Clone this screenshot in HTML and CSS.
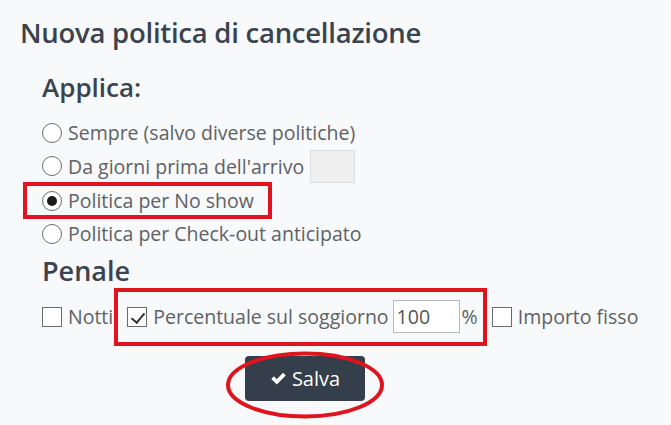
FILE: index.html
```html
<!DOCTYPE html>
<html lang="it">
<head>
<meta charset="utf-8">
<title>Nuova politica di cancellazione</title>
<link rel="stylesheet" href="styles.css">
</head>
<body>
<div class="panel">
  <h1 class="title">Nuova politica di cancellazione</h1>
  <div class="section">
    <h2 class="heading">Applica:</h2>
    <div class="options">
      <label class="opt"><span class="radio"></span>Sempre (salvo diverse politiche)</label>
      <label class="opt"><span class="radio"></span>Da giorni prima dell'arrivo <span class="days"></span></label>
      <label class="opt marked"><span class="radio checked"></span>Politica per No show</label>
      <label class="opt"><span class="radio"></span>Politica per Check-out anticipato</label>
    </div>
    <h2 class="heading penale">Penale</h2>
    <div class="checks">
      <label class="chk"><span class="box"></span>Notti</label>
      <div class="marked-row">
        <label class="chk"><span class="box checked"></span>Percentuale sul soggiorno</label>
        <span class="num">100</span>
        <span class="pct">%</span>
      </div>
      <label class="chk"><span class="box"></span>Importo fisso</label>
    </div>
    <div class="actions">
      <button class="btn"><svg class="tick" viewBox="0 0 16 16" width="17" height="17"><path d="M1.2 8.4 L3.7 5.9 L6.4 8.6 L12.3 2.7 L14.8 5.2 L6.4 13.6 Z" fill="#fff"/></svg>Salva</button>
      <svg class="ring" viewBox="0 0 160 68" width="160" height="68"><ellipse cx="80" cy="34" rx="77" ry="31.5" fill="none" stroke="#e0141e" stroke-width="4"/></svg>
    </div>
  </div>
</div>
</body>
</html>
```
FILE: styles.css
```css
* { box-sizing: border-box; }
html, body { margin: 0; padding: 0; }
body {
  background: #f8f9fa;
  font-family: "Open Sans", "Liberation Sans", sans-serif;
  color: #5d6166;
  width: 671px;
  height: 425px;
  overflow: hidden;
}
.panel { padding: 18px 0 0 20px; }
.title {
  margin: 0;
  font-size: 27.5px;
  line-height: 30px;
  font-weight: 600;
  color: #3a4350;
  letter-spacing: -0.25px;
}
.section { padding-left: 22px; }
.heading {
  margin: 22px 0 0 0;
  font-size: 26px;
  line-height: 34px;
  font-weight: 600;
  color: #3a4350;
}
.options { margin-top: 12px; display: flex; flex-direction: column; }
.opt {
  display: flex;
  align-items: center;
  height: 33.5px;
  font-size: 19.5px;
  white-space: nowrap;
}
.radio {
  width: 20px;
  height: 20px;
  border: 1px solid #6a6a6a;
  border-radius: 50%;
  background: #fff;
  margin-right: 6px;
  display: inline-flex;
  align-items: center;
  justify-content: center;
  flex: none;
}
.radio.checked::after {
  content: "";
  width: 10px;
  height: 10px;
  border-radius: 50%;
  background: #1a1a1a;
}
.days {
  display: inline-block;
  width: 45px;
  height: 33px;
  margin-left: 6px;
  background: #efefef;
  border: 1px solid #dcdcdc;
}
.opt.marked {
  align-self: flex-start;
  border: 4px solid #e0141e;
  margin-left: -19px;
  padding-left: 15px;
  padding-right: 14px;
  height: 37px;
  margin-top: -1px;
  margin-bottom: -2px;
}
.penale { margin-top: 3px; font-size: 27px; }
.checks {
  margin-top: 0;
  display: flex;
  align-items: center;
  font-size: 19.5px;
  white-space: nowrap;
}
.chk { display: flex; align-items: center; }
.box {
  width: 20px;
  height: 20px;
  border: 1px solid #6a6a6a;
  background: #fff;
  margin-right: 6px;
  position: relative;
  flex: none;
}
.box.checked::after {
  content: "";
  position: absolute;
  left: 6px;
  top: 2px;
  width: 6px;
  height: 11px;
  border-right: 2px solid #333;
  border-bottom: 2px solid #333;
  transform: rotate(40deg);
}
.marked-row {
  display: flex;
  align-items: center;
  border: 4px solid #e0141e;
  height: 58px;
  margin-left: 1px;
  padding-left: 9px;
  padding-right: 5px;
}
.num {
  display: inline-block;
  width: 67px;
  height: 33px;
  margin-left: 4px;
  border: 1px solid #b8b8b8;
  background: #fff;
  padding-left: 3px;
  line-height: 31px;
  color: #555;
}
.pct { margin-left: 2px; }
.marked-row + .chk { margin-left: 5px; }
.actions {
  position: relative;
  margin: 10px 0 0 203px;
  width: 120px;
  height: 45px;
}
.btn {
  width: 120px;
  height: 45px;
  border: none;
  border-radius: 4px;
  background: #343f4b;
  color: #fff;
  font-family: inherit;
  font-size: 20px;
  display: flex;
  align-items: center;
  justify-content: center;
  padding: 0;
}
.tick { margin-right: 5px; }
.ring {
  position: absolute;
  left: -20px;
  top: -5px;
}
```
